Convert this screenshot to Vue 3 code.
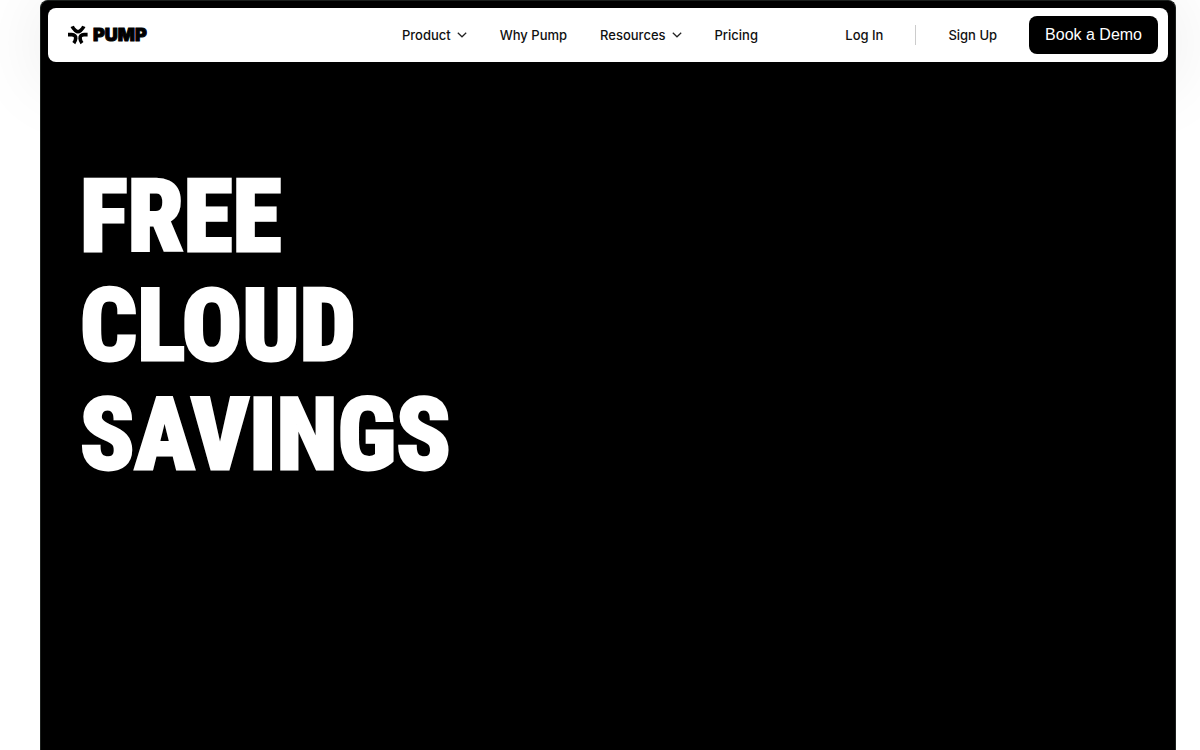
<script setup>
const links = [
  { label: 'Product', menu: true },
  { label: 'Why Pump', menu: false },
  { label: 'Resources', menu: true },
  { label: 'Pricing', menu: false },
]
const headline = ['FREE', 'CLOUD', 'SAVINGS']
</script>

<template>
  <div class="page">
    <div class="panel">
      <header class="bar">
        <a class="brand" href="#" aria-label="Pump home">
          <svg class="mark" viewBox="0 0 20 20" aria-hidden="true">
            <g fill="none" stroke="#000" stroke-width="3.6">
              <path d="M4.2 1.4 C5 3.4 6.2 4.4 7.6 5.6 C9.2 7 10.8 7 12.4 5.6 C13.8 4.4 15 3.4 15.8 1.4" />
              <path d="M0 9.6 H3.8 C6.6 9.6 7.9 11.4 7.7 13.4 C7.6 15 7 16.6 5.8 18.2" />
              <path d="M19.6 9.6 H16 C13.2 9.6 11.9 11.4 12.1 13.4 C12.2 15 12.8 16.6 14 18.2" />
            </g>
          </svg>
          <span class="name">PUMP</span>
        </a>
        <nav class="links" aria-label="Main">
          <template v-for="link in links" :key="link.label">
            <button v-if="link.menu" class="link" type="button">
              {{ link.label }}
              <svg class="chevron" viewBox="0 0 10 6" aria-hidden="true">
                <path d="M.8 .8 L5 4.8 L9.2 .8" fill="none" stroke="#222" stroke-width="1.2" />
              </svg>
            </button>
            <a v-else class="link" href="#">{{ link.label }}</a>
          </template>
        </nav>
        <div class="account">
          <a class="link" href="#">Log In</a>
          <span class="divider"></span>
          <a class="link" href="#">Sign Up</a>
          <button class="demo" type="button">Book a Demo</button>
        </div>
      </header>
      <main class="hero">
        <h1>
          <span v-for="word in headline" :key="word">{{ word }}</span>
        </h1>
      </main>
    </div>
  </div>
</template>

<style>
body {
  margin: 0;
  background: #fff;
}
</style>

<style scoped>
.page {
  box-sizing: border-box;
  min-height: 100vh;
  padding: 0 24px 0 40px;
  display: flex;
  overflow: hidden;
  font-family: Inter, "Liberation Sans", sans-serif;
}
.panel {
  box-sizing: border-box;
  flex: 1;
  min-width: 0;
  padding: 7px;
  background: #000;
  border: 1px solid #1c201e;
  border-bottom: 0;
  border-radius: 8px 8px 0 0;
}
.bar {
  box-sizing: border-box;
  min-height: 54px;
  padding: 8px 10px 8px 20px;
  display: grid;
  grid-template-columns: 1fr auto 400px;
  align-items: center;
  background: #fff;
  border-radius: 8px;
  box-shadow: 0 8px 80px rgba(0, 0, 0, 0.15);
}
.brand {
  display: flex;
  align-items: center;
  gap: 5px;
  color: #000;
  text-decoration: none;
}
.mark {
  width: 20px;
  height: 20px;
}
.name {
  font-size: 18px;
  line-height: 20px;
  font-weight: 900;
  -webkit-text-stroke: 1px #000;
}
.links {
  display: flex;
  align-items: center;
  gap: 33px;
}
.link {
  display: flex;
  align-items: center;
  gap: 6px;
  padding: 0;
  border: 0;
  background: none;
  color: #111;
  font-family: inherit;
  font-size: 13px;
  line-height: 20px;
  font-weight: 500;
  text-decoration: none;
  white-space: nowrap;
  cursor: pointer;
}
.chevron {
  width: 10px;
  height: 6px;
}
.account {
  display: flex;
  align-items: center;
  justify-content: flex-end;
  gap: 32px;
}
.divider {
  width: 1px;
  height: 20px;
  background: #ccc;
}
.demo {
  height: 38px;
  padding: 0 16px;
  border: 0;
  border-radius: 8px;
  background: #000;
  color: #fff;
  font-family: "Liberation Sans", sans-serif;
  font-size: 16px;
  line-height: 20px;
  white-space: nowrap;
  cursor: pointer;
}
.hero {
  padding: 100px 32px;
}
h1 {
  margin: 0;
  color: #fff;
  font-family: "Roboto Condensed", "Liberation Sans Narrow", Roboto, sans-serif;
  font-size: 100px;
  line-height: 109px;
  font-weight: 800;
  -webkit-text-stroke: 3px #fff;
}
h1 span {
  display: block;
}
</style>
